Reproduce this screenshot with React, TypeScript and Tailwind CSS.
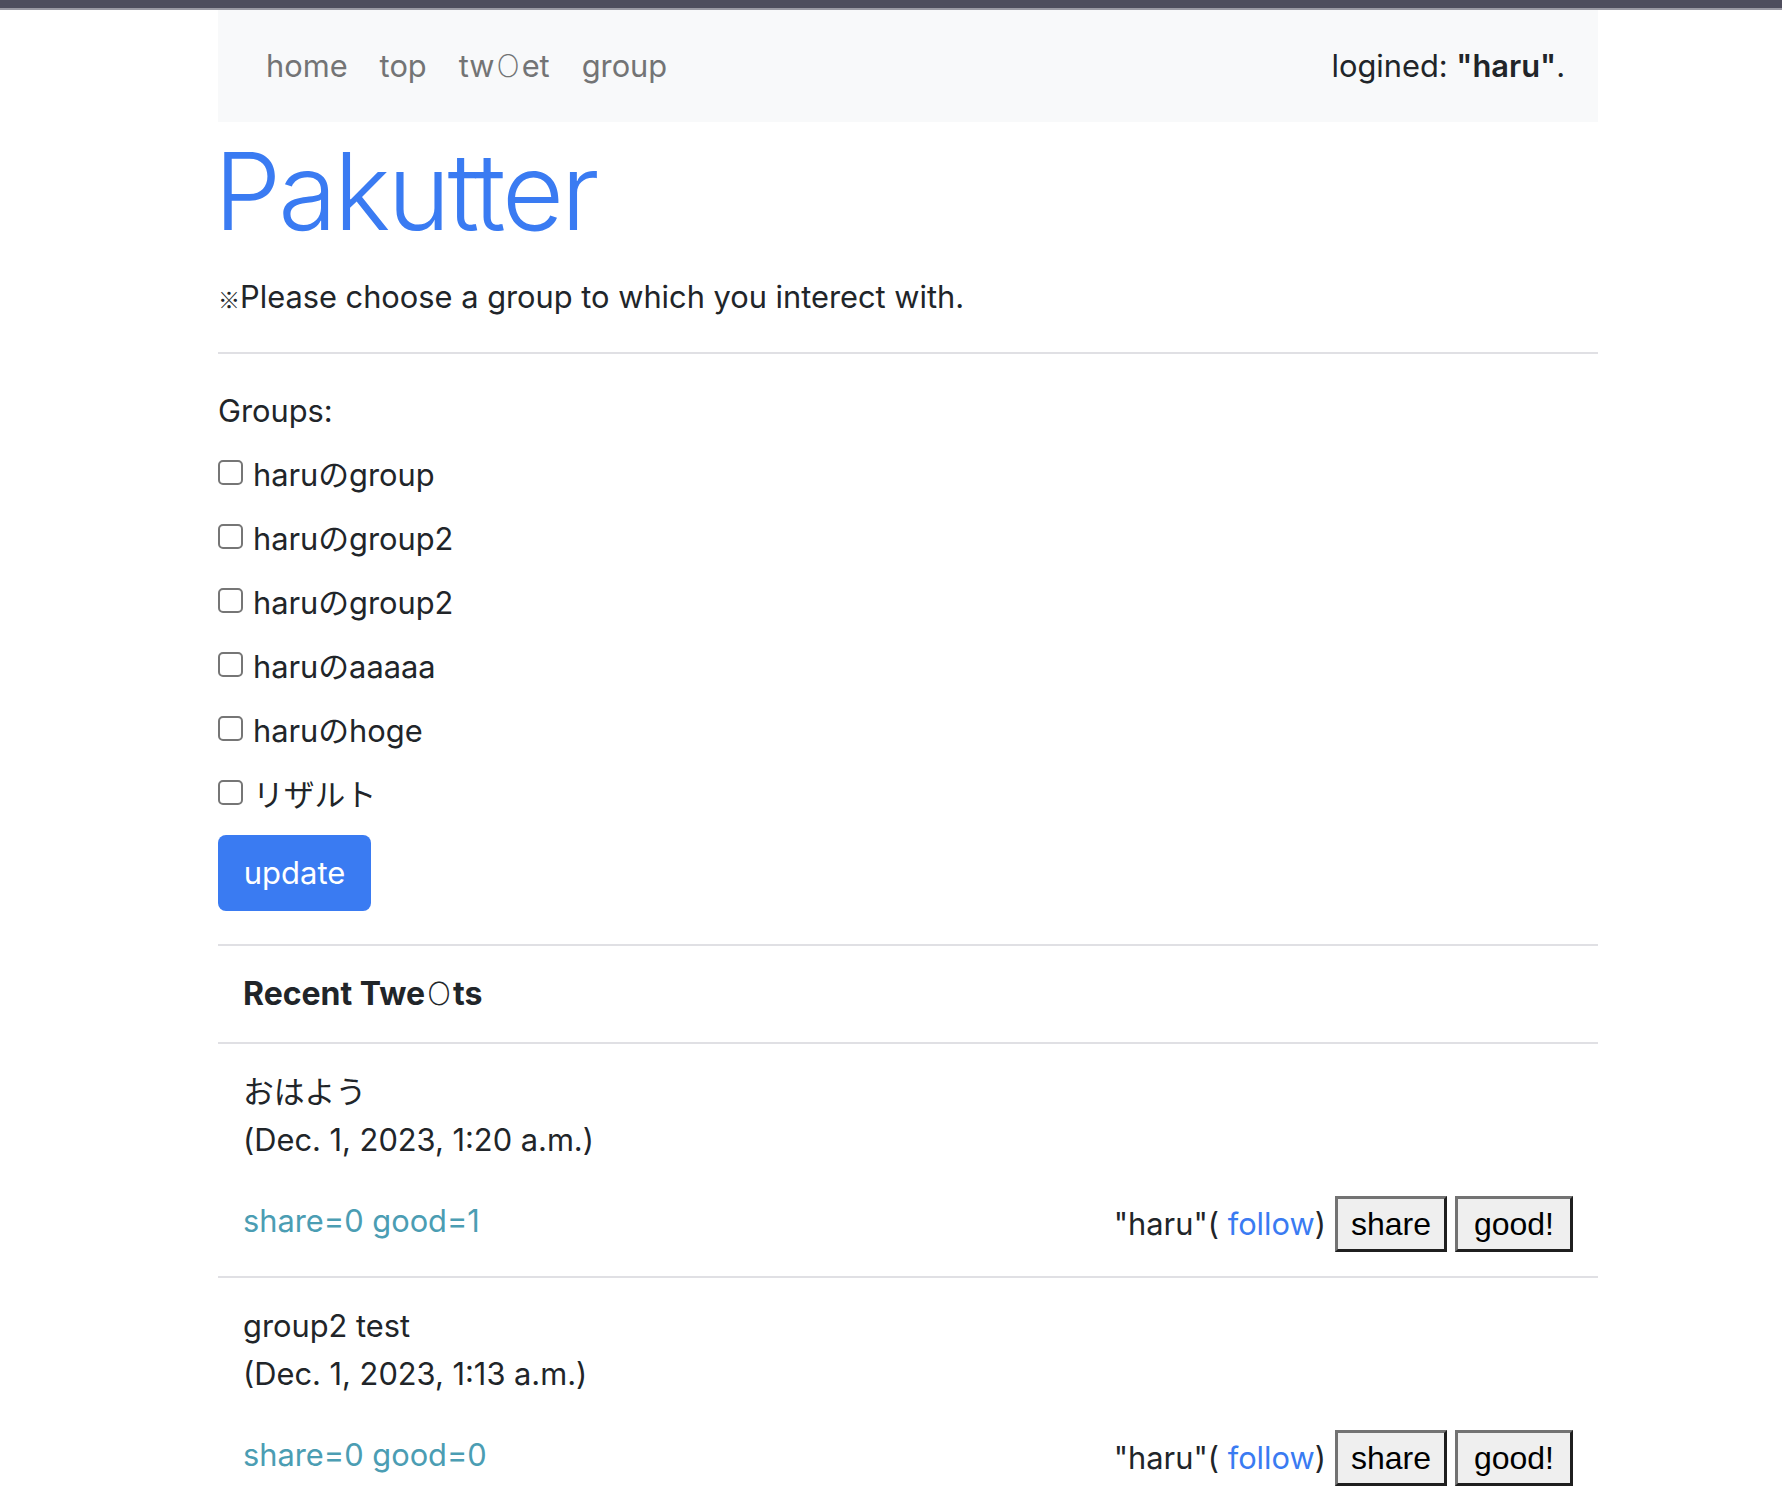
import React from "react";

const groups = ["haruのgroup", "haruのgroup2", "haruのgroup2", "haruのaaaaa", "haruのhoge", "リザルト"];

const tweets = [
  { text: "おはよう", date: "(Dec. 1, 2023, 1:20 a.m.)", share: 0, good: 1 },
  { text: "group2 test", date: "(Dec. 1, 2023, 1:13 a.m.)", share: 0, good: 0 },
];

function O() {
  return <span className="font-extralight mx-[2px]">O</span>;
}

const btn =
  "h-[56px] bg-[#efefef] text-black text-[32px] border-[3px] border-t-[#737373] border-l-[#737373] border-b-[#1f1f1f] border-r-[#1f1f1f]";

export default function App() {
  return (
    <div
      className="min-h-screen bg-white text-[#212529] text-[30.8px] leading-[48px]"
      style={{ fontFamily: "Inter, 'Noto Sans CJK JP', sans-serif" }}
    >
      <div className="h-[8px] bg-[#4e4d5d]" />
      <div className="h-[2px] bg-[#9a99a3]" />
      <div className="ml-[218px] w-[1380px]">
        <nav className="h-[112px] bg-[#f8f9fa] flex items-center justify-between pl-[32px] pr-[33px]">
          <div className="flex text-[#737475]">
            <a className="px-4">home</a>
            <a className="px-4">top</a>
            <a className="px-4">
              tw<O />et
            </a>
            <a className="px-4">group</a>
          </div>
          <div>
            logined: <span className="font-semibold">"haru"</span>.
          </div>
        </nav>

        <h1 className="mt-[5px] mb-[18px] -ml-[4px] text-[107px] leading-[128px] font-light tracking-[-0.028em] text-[#3a7bf2]">
          Pakutter
        </h1>
        <p className="mb-[30px]">
          <span
            className="text-[22px]"
            style={{ fontFamily: "'Noto Sans CJK JP', sans-serif" }}
          >
            ※
          </span>
          Please choose a group to which you interect with.
        </p>
        <div className="h-[2px] bg-[#e0e0e4]" />

        <div className="mt-[33px]">
          <div className="mb-[16px]">Groups:</div>
          {groups.map((g, i) => (
            <label key={i} className="flex items-center mb-[16px] h-[48px]">
              <input
                type="checkbox"
                className="appearance-none w-[25px] h-[25px] border-2 border-[#767676] rounded-[5px] bg-white mr-[10px] -mt-[6px]"
              />
              <span>{g}</span>
            </label>
          ))}
          <button className="w-[153px] h-[76px] rounded-[8px] bg-[#3a7bf2] text-white text-[31px]">
            update
          </button>
        </div>

        <div className="mt-[33px] border-t-2 border-[#e0e0e4]">
          <div className="px-[25px] py-[24px] font-bold text-[32px]">
            Recent Twe<O />ts
          </div>
          {tweets.map((t, i) => (
            <div key={i} className="border-t-2 border-[#e0e0e4] px-[25px] pt-[24px] pb-[24px]">
              <p className="mb-[32px]">
                {t.text}
                <br />
                {t.date}
              </p>
              <div className="flex items-center justify-between h-[56px]">
                <span className="text-[#4b9db3] -mt-[6px]">
                  share={t.share} good={t.good}
                </span>
                <div className="flex items-center">
                  <span className="mr-[9px]">
                    "haru"( <a className="text-[#3a7bf2]">follow</a>)
                  </span>
                  <button
                    className={btn + " px-[13px] mr-[8px]"}
                    style={{ fontFamily: "'Liberation Sans', Arial, sans-serif" }}
                  >
                    share
                  </button>
                  <button
                    className={btn + " px-[16px]"}
                    style={{ fontFamily: "'Liberation Sans', Arial, sans-serif" }}
                  >
                    good!
                  </button>
                </div>
              </div>
            </div>
          ))}
          <div className="border-t-2 border-[#e0e0e4]" />
        </div>
      </div>
    </div>
  );
}
